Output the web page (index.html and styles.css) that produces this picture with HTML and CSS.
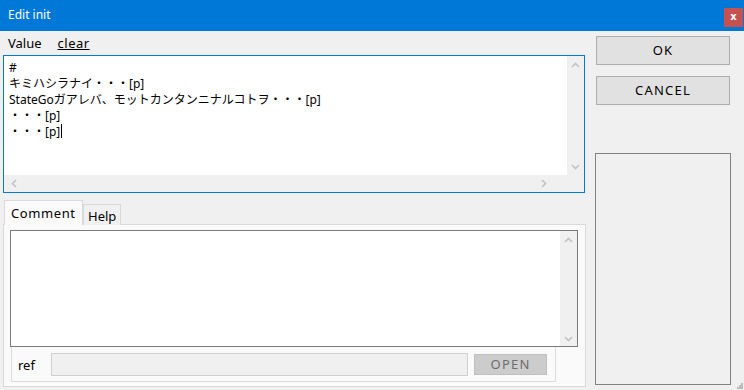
FILE: index.html
```html
<!DOCTYPE html>
<html lang="ja">
<head>
    <meta charset="UTF-8">
    <meta name="viewport" content="width=device-width, initial-scale=1.0">
    <title>Edit init</title>
    <link rel="stylesheet" href="styles.css">
</head>
<body>
    <div class="titlebar">
        <span class="title">Edit init</span>
        <span class="closeBtn">x</span>
    </div>
    <div class="dialog">
        <div class="leftCol">
            <div class="valueHead">
                <span>Value</span>
                <span class="link">clear</span>
            </div>
            <div class="editor">
                <div class="editorText">
                    <div>#</div>
                    <div>キミハシラナイ・・・[p]</div>
                    <div>StateGoガアレバ、モットカンタンニナルコトヲ・・・[p]</div>
                    <div>・・・[p]</div>
                    <div>・・・[p]<span class="caret"></span></div>
                </div>
                <div class="vscroll">
                    <svg width="9" height="6" viewBox="0 0 9 6"><path d="M1 5 L4.5 1.5 L8 5" fill="none" stroke="#c2c2c2" stroke-width="1.6"/></svg>
                    <svg width="9" height="6" viewBox="0 0 9 6"><path d="M1 1 L4.5 4.5 L8 1" fill="none" stroke="#c2c2c2" stroke-width="1.6"/></svg>
                </div>
                <div class="hscroll">
                    <svg width="6" height="9" viewBox="0 0 6 9"><path d="M5 1 L1.5 4.5 L5 8" fill="none" stroke="#c2c2c2" stroke-width="1.6"/></svg>
                    <svg width="6" height="9" viewBox="0 0 6 9"><path d="M1 1 L4.5 4.5 L1 8" fill="none" stroke="#c2c2c2" stroke-width="1.6"/></svg>
                </div>
                <div class="corner"></div>
            </div>
            <div class="tabs">
                <div class="tab active">Comment</div>
                <div class="tab">Help</div>
            </div>
            <div class="tabPanel">
                <div class="comment">
                    <div class="commentText"></div>
                    <div class="vscroll">
                        <svg width="9" height="6" viewBox="0 0 9 6"><path d="M1 5 L4.5 1.5 L8 5" fill="none" stroke="#c2c2c2" stroke-width="1.6"/></svg>
                        <svg width="9" height="6" viewBox="0 0 9 6"><path d="M1 1 L4.5 4.5 L8 1" fill="none" stroke="#c2c2c2" stroke-width="1.6"/></svg>
                    </div>
                </div>
                <div class="refRow">
                    <span class="refLabel">ref</span>
                    <div class="refInput"></div>
                    <div class="openBtn">OPEN</div>
                </div>
            </div>
        </div>
        <div class="rightCol">
            <div class="btn">OK</div>
            <div class="btn">CANCEL</div>
            <div class="sidePanel"></div>
        </div>
    </div>
    <div class="grip">
        <svg width="6" height="6" viewBox="0 0 6 6">
            <rect x="4" y="0" width="2" height="2" fill="#bcbcbc"/>
            <rect x="2" y="2" width="2" height="2" fill="#bcbcbc"/>
            <rect x="4" y="2" width="2" height="2" fill="#bcbcbc"/>
            <rect x="0" y="4" width="2" height="2" fill="#bcbcbc"/>
            <rect x="2" y="4" width="2" height="2" fill="#bcbcbc"/>
            <rect x="4" y="4" width="2" height="2" fill="#bcbcbc"/>
        </svg>
    </div>
</body>
</html>
```

FILE: styles.css
```css
body {
    margin: 0;
    width: 744px;
    height: 390px;
    background: #f0f0f0;
    font-family: "Noto Sans", "Noto Sans CJK JP", sans-serif;
    font-size: 12px;
    color: #000;
    position: relative;
    overflow: hidden;
}
.titlebar {
    height: 31px;
    background: #0078d7;
    display: flex;
    align-items: center;
    justify-content: space-between;
}
.title {
    color: #fff;
    padding-left: 8px;
    font-size: 12px;
    margin-top: -2px;
}
.closeBtn {
    width: 19px;
    height: 19px;
    margin-right: 1px;
    margin-top: 4px;
    background: #c75050;
    color: #fff;
    font-family: "DejaVu Sans", sans-serif;
    font-weight: bold;
    font-size: 10px;
    line-height: 18px;
    text-align: center;
}
.dialog {
    display: flex;
    padding-left: 3px;
}
.leftCol {
    width: 583px;
}
.valueHead {
    height: 24px;
    display: flex;
    align-items: center;
    gap: 16px;
    padding-left: 5px;
    font-size: 13px;
}
.link {
    text-decoration: underline;
    letter-spacing: 0.5px;
}
.editor {
    width: 582px;
    height: 138px;
    box-sizing: border-box;
    border: 1px solid #0078d7;
    display: grid;
    grid-template-columns: 1fr 17px;
    grid-template-rows: 1fr 17px;
    background: #fff;
}
.editorText {
    padding: 4px 0 0 5px;
    line-height: 16px;
    font-size: 12px;
    white-space: nowrap;
    overflow: hidden;
}
.caret {
    display: inline-block;
    width: 1px;
    height: 14px;
    background: #000;
    margin-left: 1px;
    vertical-align: -2px;
}
.vscroll {
    background: #f0f0f0;
    display: flex;
    flex-direction: column;
    justify-content: space-between;
    align-items: center;
    padding: 6px 0 5px;
}
.hscroll {
    background: #f0f0f0;
    display: flex;
    justify-content: space-between;
    align-items: center;
    padding: 0 20px 0 7px;
}
.corner {
    background: #f0f0f0;
}
.tabs {
    display: flex;
    align-items: flex-end;
    height: 25px;
    margin-top: 7px;
    padding-left: 1px;
    position: relative;
    z-index: 1;
}
.tab {
    height: 21px;
    box-sizing: border-box;
    border: 1px solid #d9d9d9;
    border-bottom: none;
    background: #f0f0f0;
    padding: 2px 4px 0 4px;
    font-size: 13px;
    line-height: 18px;
}
.tab.active {
    height: 25px;
    background: #fafafa;
    padding: 3px 5px 0 6px;
    width: 79px;
    letter-spacing: 0.6px;
}
.tabPanel {
    width: 583px;
    height: 163px;
    box-sizing: border-box;
    border: 1px solid #d9d9d9;
    margin-top: -1px;
    background: #fafafa;
    padding: 5px 7px 0 6px;
}
.comment {
    width: 568px;
    height: 117px;
    box-sizing: border-box;
    border: 1px solid #7a7a7a;
    background: #fff;
    display: flex;
}
.commentText {
    flex: 1;
}
.comment .vscroll {
    width: 17px;
    box-sizing: border-box;
    padding: 6px 0 4px;
}
.refRow {
    width: 545px;
    height: 35px;
    box-sizing: border-box;
    border: 1px solid #dcdcdc;
    border-top: none;
    margin-left: 1px;
    display: flex;
    align-items: center;
    padding-left: 6px;
}
.refLabel {
    font-size: 13px;
    width: 33px;
    margin-top: 1px;
}
.refInput {
    width: 417px;
    height: 23px;
    box-sizing: border-box;
    border: 1px solid #cfcfcf;
    background: #f0f0f0;
}
.openBtn {
    width: 73px;
    height: 21px;
    box-sizing: border-box;
    margin-left: 6px;
    border: 1px solid #bfbfbf;
    background: #cccccc;
    color: #6d6d6d;
    font-size: 13px;
    line-height: 19px;
    text-align: center;
    letter-spacing: 1.2px;
}
.rightCol {
    margin-left: 10px;
    padding-top: 5px;
    display: flex;
    flex-direction: column;
    gap: 11px;
}
.btn {
    width: 134px;
    height: 29px;
    box-sizing: border-box;
    border: 1px solid #adadad;
    background: #e1e1e1;
    text-align: center;
    line-height: 27px;
    font-size: 13px;
    letter-spacing: 1.2px;
}
.sidePanel {
    width: 136px;
    height: 232px;
    box-sizing: border-box;
    margin-left: -1px;
    margin-top: 37px;
    border: 1px solid #828282;
    background: #f0f0f0;
}
.grip {
    position: absolute;
    right: 1px;
    bottom: 1px;
    line-height: 0;
}
```
